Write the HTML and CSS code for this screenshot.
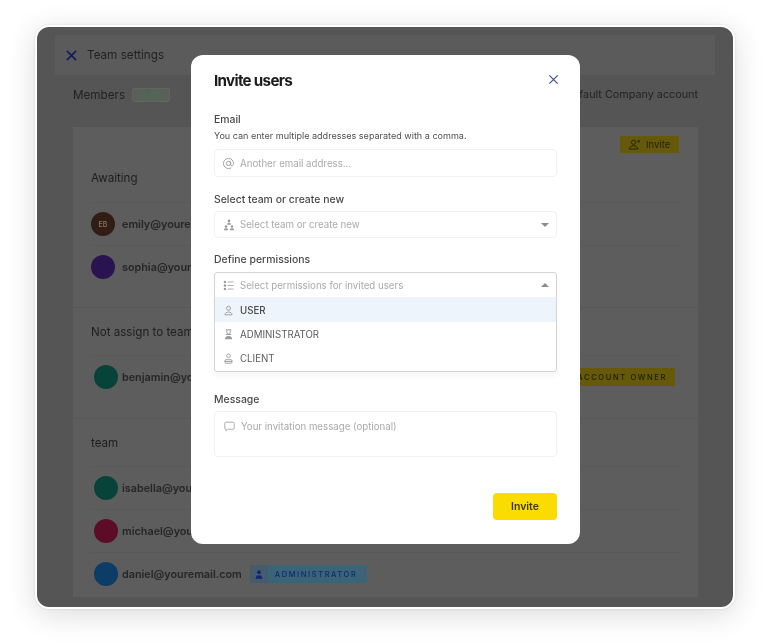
FILE: index.html
```html
<!DOCTYPE html>
<html lang="en">
<head>
    <meta charset="UTF-8">
    <meta name="viewport" content="width=device-width, initial-scale=1.0">
    <title>Invite users</title>
    <link rel="stylesheet" href="styles.css">
</head>
<body>
    <div class="window">
        <div class="topbar">
            <svg class="close-top" viewBox="0 0 12 12"><path d="M1 1l10 10M11 1L1 11"/></svg>
            <span>Team settings</span>
        </div>
        <div class="members">
            <div class="members-left">
                <span>Members</span>
                <span class="count">14 /20</span>
            </div>
            <span>Default Company account</span>
        </div>

        <div class="panel">
            <div class="section first">
                <div class="panel-actions">
                    <div class="invite-small">
                        <svg viewBox="0 0 14 12"><circle cx="6" cy="3.6" r="2.3"/><path d="M1.5 11c0-2.4 2-3.6 4.5-3.6s4.5 1.2 4.500 3.600zM11.500 1v3M10 2.500h3"/></svg>
                        <span>Invite</span>
                    </div>
                </div>
                <h3>Awaiting</h3>
                <div class="row">
                    <span class="avatar brown">EB</span>
                    <span class="mail">emily@youremail.com</span>
                </div>
                <div class="row">
                    <span class="avatar purple"></span>
                    <span class="mail">sophia@youremail.com</span>
                </div>
            </div>

            <div class="section second">
                <h3>Not assign to team</h3>
                <div class="row inset">
                    <span class="avatar green"></span>
                    <span class="mail">benjamin@youremail.com</span>
                    <span class="badge-owner">ACCOUNT OWNER</span>
                </div>
            </div>

            <div class="section third">
                <h3>team</h3>
                <div class="row inset">
                    <span class="avatar green"></span>
                    <span class="mail">isabella@youremail.com</span>
                </div>
                <div class="row inset">
                    <span class="avatar red"></span>
                    <span class="mail">michael@youremail.com</span>
                </div>
                <div class="row inset">
                    <span class="avatar blue"></span>
                    <span class="mail">daniel@youremail.com</span>
                    <span class="badge-admin">
                        <span class="badge-icon">
                            <svg viewBox="0 0 12 12"><circle cx="6" cy="3.2" r="2.2"/><path d="M2 11c0-2.600 1.600-4 4-4s4 1.400 4 4z"/></svg>
                        </span>
                        <span class="badge-text">ADMINISTRATOR</span>
                    </span>
                </div>
            </div>
        </div>
    </div>

    <div class="modal">
        <div class="modal-head">
            <h2>Invite users</h2>
            <svg class="close" viewBox="0 0 12 12"><path d="M1.500 1.500l9 9M10.500 1.500l-9 9"/></svg>
        </div>

        <div class="field email-field">
            <label>Email</label>
            <p class="hint">You can enter multiple addresses separated with a comma.</p>
            <div class="input">
                <svg class="ico" viewBox="1 1 12 12"><circle cx="7" cy="7" r="2.300"/><path d="M9.300 4.700v3.100c0 1 .6 1.600 1.400 1.600 1 0 1.800-1 1.800-2.400C12.500 3.800 10.200 1.500 7 1.500S1.500 3.800 1.500 7 3.800 12.500 7 12.500c1.200 0 2.200-.3 3-.8"/></svg>
                <span>Another email address...</span>
            </div>
        </div>

        <div class="field team-field">
            <label>Select team or create new</label>
            <div class="input select">
                <svg class="ico tree" viewBox="0 0 14 14"><circle cx="7" cy="2.200" r="1.500"/><path d="M4.800 6.600c0-1.400 1-2.100 2.200-2.100s2.200.7 2.200 2.100z"/><circle cx="3.500" cy="8.700" r="1.500"/><path d="M1 13c0-1.400 1.100-2.100 2.500-2.100S6 11.600 6 13z"/><circle cx="10.500" cy="8.700" r="1.500"/><path d="M8 13c0-1.400 1.100-2.100 2.500-2.100S13 11.600 13 13z"/></svg>
                <span>Select team or create new</span>
                <i class="caret"></i>
            </div>
        </div>

        <div class="field perm-field">
            <label>Define permissions</label>
            <div class="dropdown">
                <div class="input select open">
                    <svg class="ico" viewBox="0 0 14 14"><path d="M6 2.500h7.500M6 7h7.500M6 11.500h7.500"/><circle class="dot" cx="2.500" cy="2.500" r="1.600"/><circle class="dot" cx="2.500" cy="7" r="1.600"/><circle class="dot" cx="2.500" cy="11.500" r="1.600"/></svg>
                    <span>Select permissions for invited users</span>
                    <i class="caret up"></i>
                </div>
                <div class="option active">
                    <svg class="ico" viewBox="0 0 14 14"><circle cx="7" cy="4.200" r="2.500"/><path d="M2.500 12.500c0-2.500 2-3.500 4.500-3.500s4.500 1 4.500 3.500z"/></svg>
                    <span>USER</span>
                </div>
                <div class="option admin">
                    <svg class="ico" viewBox="0 0 14 14"><path d="M3.500 1h7M3.500 7h7M4.800 1v3a2.200 2.200 0 0 0 4.400 0V1"/><path class="dot" d="M2.500 13c0-2.500 1.500-4 4.500-4s4.500 1.500 4.500 4z"/></svg>
                    <span>ADMINISTRATOR</span>
                </div>
                <div class="option">
                    <svg class="ico" viewBox="0 0 14 14"><circle cx="7" cy="3.500" r="2.300"/><rect x="2.500" y="8.500" width="9" height="4.500" rx="1.500"/><path d="M2.500 10.700h9"/></svg>
                    <span>CLIENT</span>
                </div>
            </div>
        </div>

        <div class="field message-field">
            <label>Message</label>
            <div class="input textarea">
                <svg class="ico" viewBox="0 0 14 14"><path d="M2.500 1.500h9a1.500 1.500 0 0 1 1.500 1.500v6a1.500 1.500 0 0 1-1.500 1.500H5L2.500 12.500V10.500A1.500 1.500 0 0 1 1 9V3a1.500 1.500 0 0 1 1.500-1.500z"/></svg>
                <span>Your invitation message (optional)</span>
            </div>
        </div>

        <div class="modal-foot">
            <button>Invite</button>
        </div>
    </div>
</body>
</html>
```

FILE: styles.css
```css
* {
    box-sizing: border-box;
}
html, body {
    margin: 0;
    height: 643px;
    overflow: hidden;
}
body {
    position: relative;
    background-color: #fff;
    font-family: Inter, "Liberation Sans", sans-serif;
    padding: 25px 33px 34px 35px;
}
h2, h3, p {
    margin: 0;
}

/* dimmed page behind the dialog */
.window {
    height: 584px;
    border: 2px solid #fff;
    border-radius: 14px;
    background-color: #555;
    box-shadow: 0 6px 30px rgba(0, 0, 0, .14), 0 0 3px rgba(0, 0, 0, .12);
    overflow: hidden;
    padding: 8px 18px 0;
    color: #222;
    filter: blur(.3px);
}
.topbar {
    height: 40px;
    background-color: #5b5b5b;
    display: flex;
    align-items: center;
    gap: 10px;
    padding-left: 11px;
    font-size: 11.700px;
}
.close-top {
    width: 11px;
    height: 11px;
    fill: none;
    stroke: #101a5c;
    stroke-width: 1.700;
}
.members {
    height: 52px;
    display: flex;
    justify-content: space-between;
    align-items: flex-start;
    padding: 13px 17px 0 18px;
    font-size: 10.800px;
}
.members-left {
    display: flex;
    align-items: center;
    gap: 7px;
    font-size: 11.700px;
}
.count {
    font-size: 8px;
    color: #3f7a45;
    background-color: #5a5f5a;
    border: 1px solid #60675f;
    padding: 1px 6px;
    border-radius: 2px;
}
.panel {
    width: 625px;
    margin-left: 18px;
    background-color: #5d5d5d;
}
.section {
    padding: 0 18px;
    border-bottom: 1px solid #585858;
}
.section.first {
    height: 181px;
    padding-top: 9px;
}
.section.second {
    height: 111px;
    padding-top: 1px;
}
.section.third {
    border-bottom: 0;
    height: 178px;
    padding-top: 1px;
}
.section h3 {
    height: 46px;
    display: flex;
    align-items: center;
    font-size: 11.600px;
    font-weight: 400;
    color: #1e1e1e;
}
.section.first h3 {
    height: 49px;
    padding-top: 1px;
}
.panel-actions {
    height: 17px;
    display: flex;
    justify-content: flex-end;
    margin-right: 1px;
}
.invite-small {
    display: flex;
    align-items: center;
    gap: 5px;
    width: 59px;
    height: 17px;
    padding-left: 8px;
    font-size: 9.500px;
    background-color: #665a0a;
    color: #24210c;
}
.invite-small svg {
    width: 13px;
    height: 11px;
    fill: none;
    stroke: #24210c;
    stroke-width: 1;
}
.row {
    height: 43px;
    display: flex;
    align-items: center;
    gap: 7px;
    border-top: 1px solid #595959;
    font-size: 10.800px;
    font-weight: 600;
}
.row.inset {
    padding-left: 3px;
    gap: 4px;
}
.mail {
    color: #262626;
}
.avatar {
    width: 24px;
    height: 24px;
    border-radius: 50%;
    display: flex;
    align-items: center;
    justify-content: center;
    font-size: 7px;
    font-weight: 500;
    color: #827a76;
}
.brown { background-color: #321d15; }
.purple { background-color: #2a144f; }
.green { background-color: #08433a; }
.red { background-color: #5c0c26; }
.blue { background-color: #0b3d67; }
.badge-owner {
    margin-left: auto;
    margin-right: 5px;
    height: 18px;
    width: 130px;
    padding-right: 8px;
    display: flex;
    align-items: center;
    justify-content: flex-end;
    background-color: #665a0a;
    color: #1e1b07;
    font-size: 7.500px;
    font-weight: 500;
    letter-spacing: 1.650px;
    white-space: nowrap;
}
.badge-admin {
    margin-left: 4px;
    height: 18px;
    width: 117px;
    display: flex;
    background-color: #3b6479;
    color: #0e2a70;
}
.badge-icon {
    width: 18px;
    background-color: #455c6c;
    display: flex;
    align-items: center;
    justify-content: center;
}
.badge-icon svg {
    width: 10px;
    height: 11px;
    fill: #12237a;
}
.badge-text {
    flex: 1;
    display: flex;
    align-items: center;
    padding-left: 7px;
    font-size: 7.500px;
    font-weight: 500;
    letter-spacing: 1.600px;
}

/* dialog */
.modal {
    position: absolute;
    left: 191px;
    top: 55px;
    width: 389px;
    height: 489px;
    background-color: #fff;
    border-radius: 12px;
    padding: 0 23px;
    display: flex;
    flex-direction: column;
    filter: blur(.3px);
}
.modal-head {
    height: 52px;
    display: flex;
    justify-content: space-between;
    align-items: flex-start;
    padding-top: 16px;
}
.modal-head h2 {
    font-size: 15.200px;
    font-weight: 700;
    letter-spacing: -.7px;
    color: #1c1c1c;
}
.close {
    width: 11px;
    height: 11px;
    margin: 3px -2px 0 0;
    fill: none;
    stroke: #3d4d90;
    stroke-width: 1.300;
}
.field label {
    display: block;
    font-size: 10.450px;
    font-weight: 500;
    color: #4a4a4a;
    line-height: 16px;
}
.hint {
    font-size: 9.050px;
    color: #4f4f4f;
    line-height: 12px;
    margin-top: 2px;
}
.email-field { margin-top: 5px; }
.team-field { margin-top: 15px; }
.perm-field { margin-top: 14px; }
.message-field { margin-top: 20px; }
.input {
    height: 28px;
    border: 1px solid #f1f1f1;
    border-radius: 4px;
    display: flex;
    align-items: center;
    gap: 6px;
    padding-left: 8px;
    font-size: 9.700px;
    color: #aaa;
}
.email-field .input {
    margin-top: 7px;
}
.team-field .input {
    margin-top: 3px;
    height: 27px;
}
.ico {
    width: 11px;
    height: 11px;
    flex: none;
    fill: none;
    stroke: #9a9a9a;
    stroke-width: 1;
}
.ico.tree {
    width: 12px;
    height: 12px;
    margin-right: -1px;
    fill: #9a9a9a;
    stroke: none;
}
.ico .dot {
    fill: #9a9a9a;
    stroke: none;
}
.select {
    padding-right: 7px;
}
.caret {
    margin-left: auto;
    width: 0;
    height: 0;
    border-left: 4px solid transparent;
    border-right: 4px solid transparent;
    border-top: 4px solid #8c8c8c;
}
.caret.up {
    border-top: 0;
    border-bottom: 4px solid #8c8c8c;
}
.dropdown {
    margin-top: 4px;
    height: 100px;
    border: 1px solid #d4d4d4;
    border-radius: 3px;
    box-shadow: 0 5px 5px rgba(0, 0, 0, .03);
}
.dropdown .input {
    height: 24px;
    border: 0;
}
.option {
    height: 24px;
    display: flex;
    align-items: center;
    gap: 6px;
    padding-left: 8px;
    font-size: 9.700px;
    color: #5c5c5c;
}
.option.active {
    height: 25px;
    padding-top: 1px;
    background-color: #eef4fc;
    color: #4a4a4a;
    font-weight: 500;
}
.option.admin {
    padding-top: 1px;
}
.option .ico {
    stroke: #8c8c8c;
}
.message-field .input {
    margin-top: 3px;
}
.input.textarea {
    height: 46px;
    align-items: flex-start;
    padding: 9px 0 0 9px;
}
.modal-foot {
    margin-top: 36px;
    display: flex;
    justify-content: flex-end;
}
button {
    width: 64px;
    height: 27px;
    border: none;
    border-radius: 4px;
    background-color: #fadc00;
    color: #3b3505;
    font-family: inherit;
    font-size: 10.500px;
    font-weight: 600;
}
```
